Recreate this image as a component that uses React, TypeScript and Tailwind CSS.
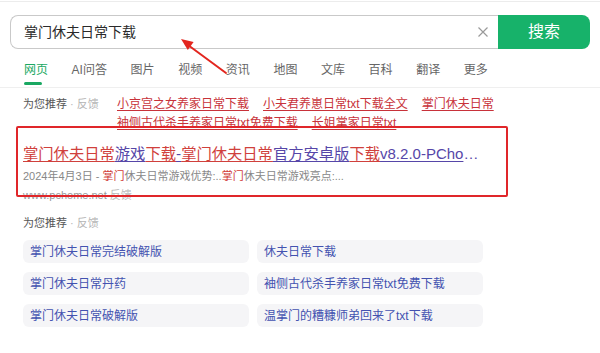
import React from "react";

const tabs = ["网页", "AI问答", "图片", "视频", "资讯", "地图", "文库", "百科", "翻译", "更多"];
const recLinks = [
  "小京宫之女养家日常下载",
  "小夫君养崽日常txt下载全文",
  "掌门休夫日常",
  "袖侧古代杀手养家日常txt免费下载",
  "长姐掌家日常txt",
];
const chips = [
  "掌门休夫日常完结破解版",
  "休夫日常下载",
  "掌门休夫日常丹药",
  "袖侧古代杀手养家日常txt免费下载",
  "掌门休夫日常破解版",
  "温掌门的糟糠师弟回来了txt下载",
];

const titleParts: [string, boolean][] = [
  ["掌门休夫日常", true],
  ["游戏", false],
  ["下载", true],
  ["-", false],
  ["掌门休夫日常", true],
  ["官方安卓版", false],
  ["下载", true],
];

export default function App() {
  return (
    <div className="relative w-[600px] h-[353px] overflow-hidden bg-white font-['Liberation_Sans','Noto_Sans_CJK_SC',sans-serif]">
      <div className="mt-px h-px bg-[#ececec]" />
      {/* search */}
      <div className="mt-[13px] ml-[10px] flex h-[34px]">
        <div className="flex w-[488px] items-center rounded-l-[8px] border border-r-0 border-[#c9c9c9] pl-[13px] pr-[9px]">
          <span className="flex-1 text-[14px] text-[#2a2a2a]">掌门休夫日常下载</span>
          <svg width="12" height="12" viewBox="0 0 12 12">
            <path d="M1.5 1.5 L10.5 10.5 M10.5 1.5 L1.5 10.5" stroke="#9a9a9a" strokeWidth="1.2" />
          </svg>
        </div>
        <div className="flex w-[92px] items-center justify-center rounded-r-[8px] bg-[#17b26a] text-[16px] text-white">
          搜索
        </div>
      </div>
      {/* tabs */}
      <div className="mt-[13px] flex h-[26px] gap-x-[23.6px] border-b border-[#efefef] pl-[24px]">
        {tabs.map((t, i) =>
          i === 0 ? (
            <div key={t} className="flex flex-col items-start">
              <span className="text-[12px] leading-[16px] text-[#1aa862]">{t}</span>
              <span className="mt-[4px] h-[3px] w-[18px] rounded-full bg-[#1aa862]" />
            </div>
          ) : (
            <span key={t} className="text-[12px] leading-[16px] text-[#666]">
              {t}
            </span>
          )
        )}
      </div>
      {/* recommendation */}
      <div className="mt-[7px] flex pl-[23px] leading-[19px]">
        <div className="w-[94px] shrink-0 text-[11px] text-[#555]">
          为您推荐 <span className="text-[#b5b5b5]">· 反馈</span>
        </div>
        <div className="flex w-[385px] flex-wrap gap-x-[14px] text-[12px]">
          {recLinks.map((l) => (
            <span key={l} className="text-[#c8323a] underline decoration-[#c8323a] underline-offset-[2px]">
              {l}
            </span>
          ))}
        </div>
      </div>
      {/* result */}
      <div className="mt-[11px] pl-[23px]">
        <div className="text-[15.3px] leading-[20px] whitespace-nowrap">
          {titleParts.map(([t, red], i) => (
            <span
              key={i}
              className={
                red
                  ? "text-[#d0403c] underline decoration-[#d0403c] underline-offset-[2px]"
                  : "text-[#5646a8] underline decoration-[#5646a8] underline-offset-[2px]"
              }
            >
              {t}
            </span>
          ))}
          <span className="text-[15px] text-[#5646a8] underline decoration-[#5646a8] underline-offset-[2px]">
            v8.2.0-PCho
          </span>
          <span className="text-[15px] text-[#5646a8]">…</span>
        </div>
        <div className="mt-[4px] text-[11px] leading-[16px] text-[#888]">
          2024年4月3日 - <span className="text-[#d13b36]">掌门</span>休夫日常游戏优势:..
          <span className="text-[#d13b36]">掌门</span>休夫日常游戏亮点:...
        </div>
        <div className="mt-[3px] text-[11px] leading-[16px] text-[#999]">
          www.pchome.net <span className="text-[#bbb]">反馈</span>
        </div>
      </div>
      {/* recommendation 2 */}
      <div className="mt-[12px] pl-[23px] text-[11px] leading-[16px] text-[#555]">
        为您推荐 <span className="text-[#b5b5b5]">· 反馈</span>
      </div>
      <div className="mt-[9px] ml-[23px] grid grid-cols-[226px_226px] gap-x-[8px] gap-y-[9px]">
        {chips.map((c) => (
          <div
            key={c}
            className="flex h-[23px] items-center rounded-[6px] bg-[#f5f5f7] pl-[7px] text-[12px] text-[#4352b0]"
          >
            {c}
          </div>
        ))}
      </div>

      {/* annotation box */}
      <div className="pointer-events-none absolute left-[16px] top-[126px] h-[71px] w-[492px] rounded-[2px] border-2 border-[#e0262a]" />
      {/* annotation arrow */}
      <svg className="pointer-events-none absolute left-0 top-0" width="600" height="353">
        <line x1="226" y1="73" x2="188" y2="45" stroke="#e3261f" strokeWidth="2" strokeLinecap="round" />
        <polygon points="181,39 193.6,42 187.8,50" fill="#e3261f" />
      </svg>
    </div>
  );
}
